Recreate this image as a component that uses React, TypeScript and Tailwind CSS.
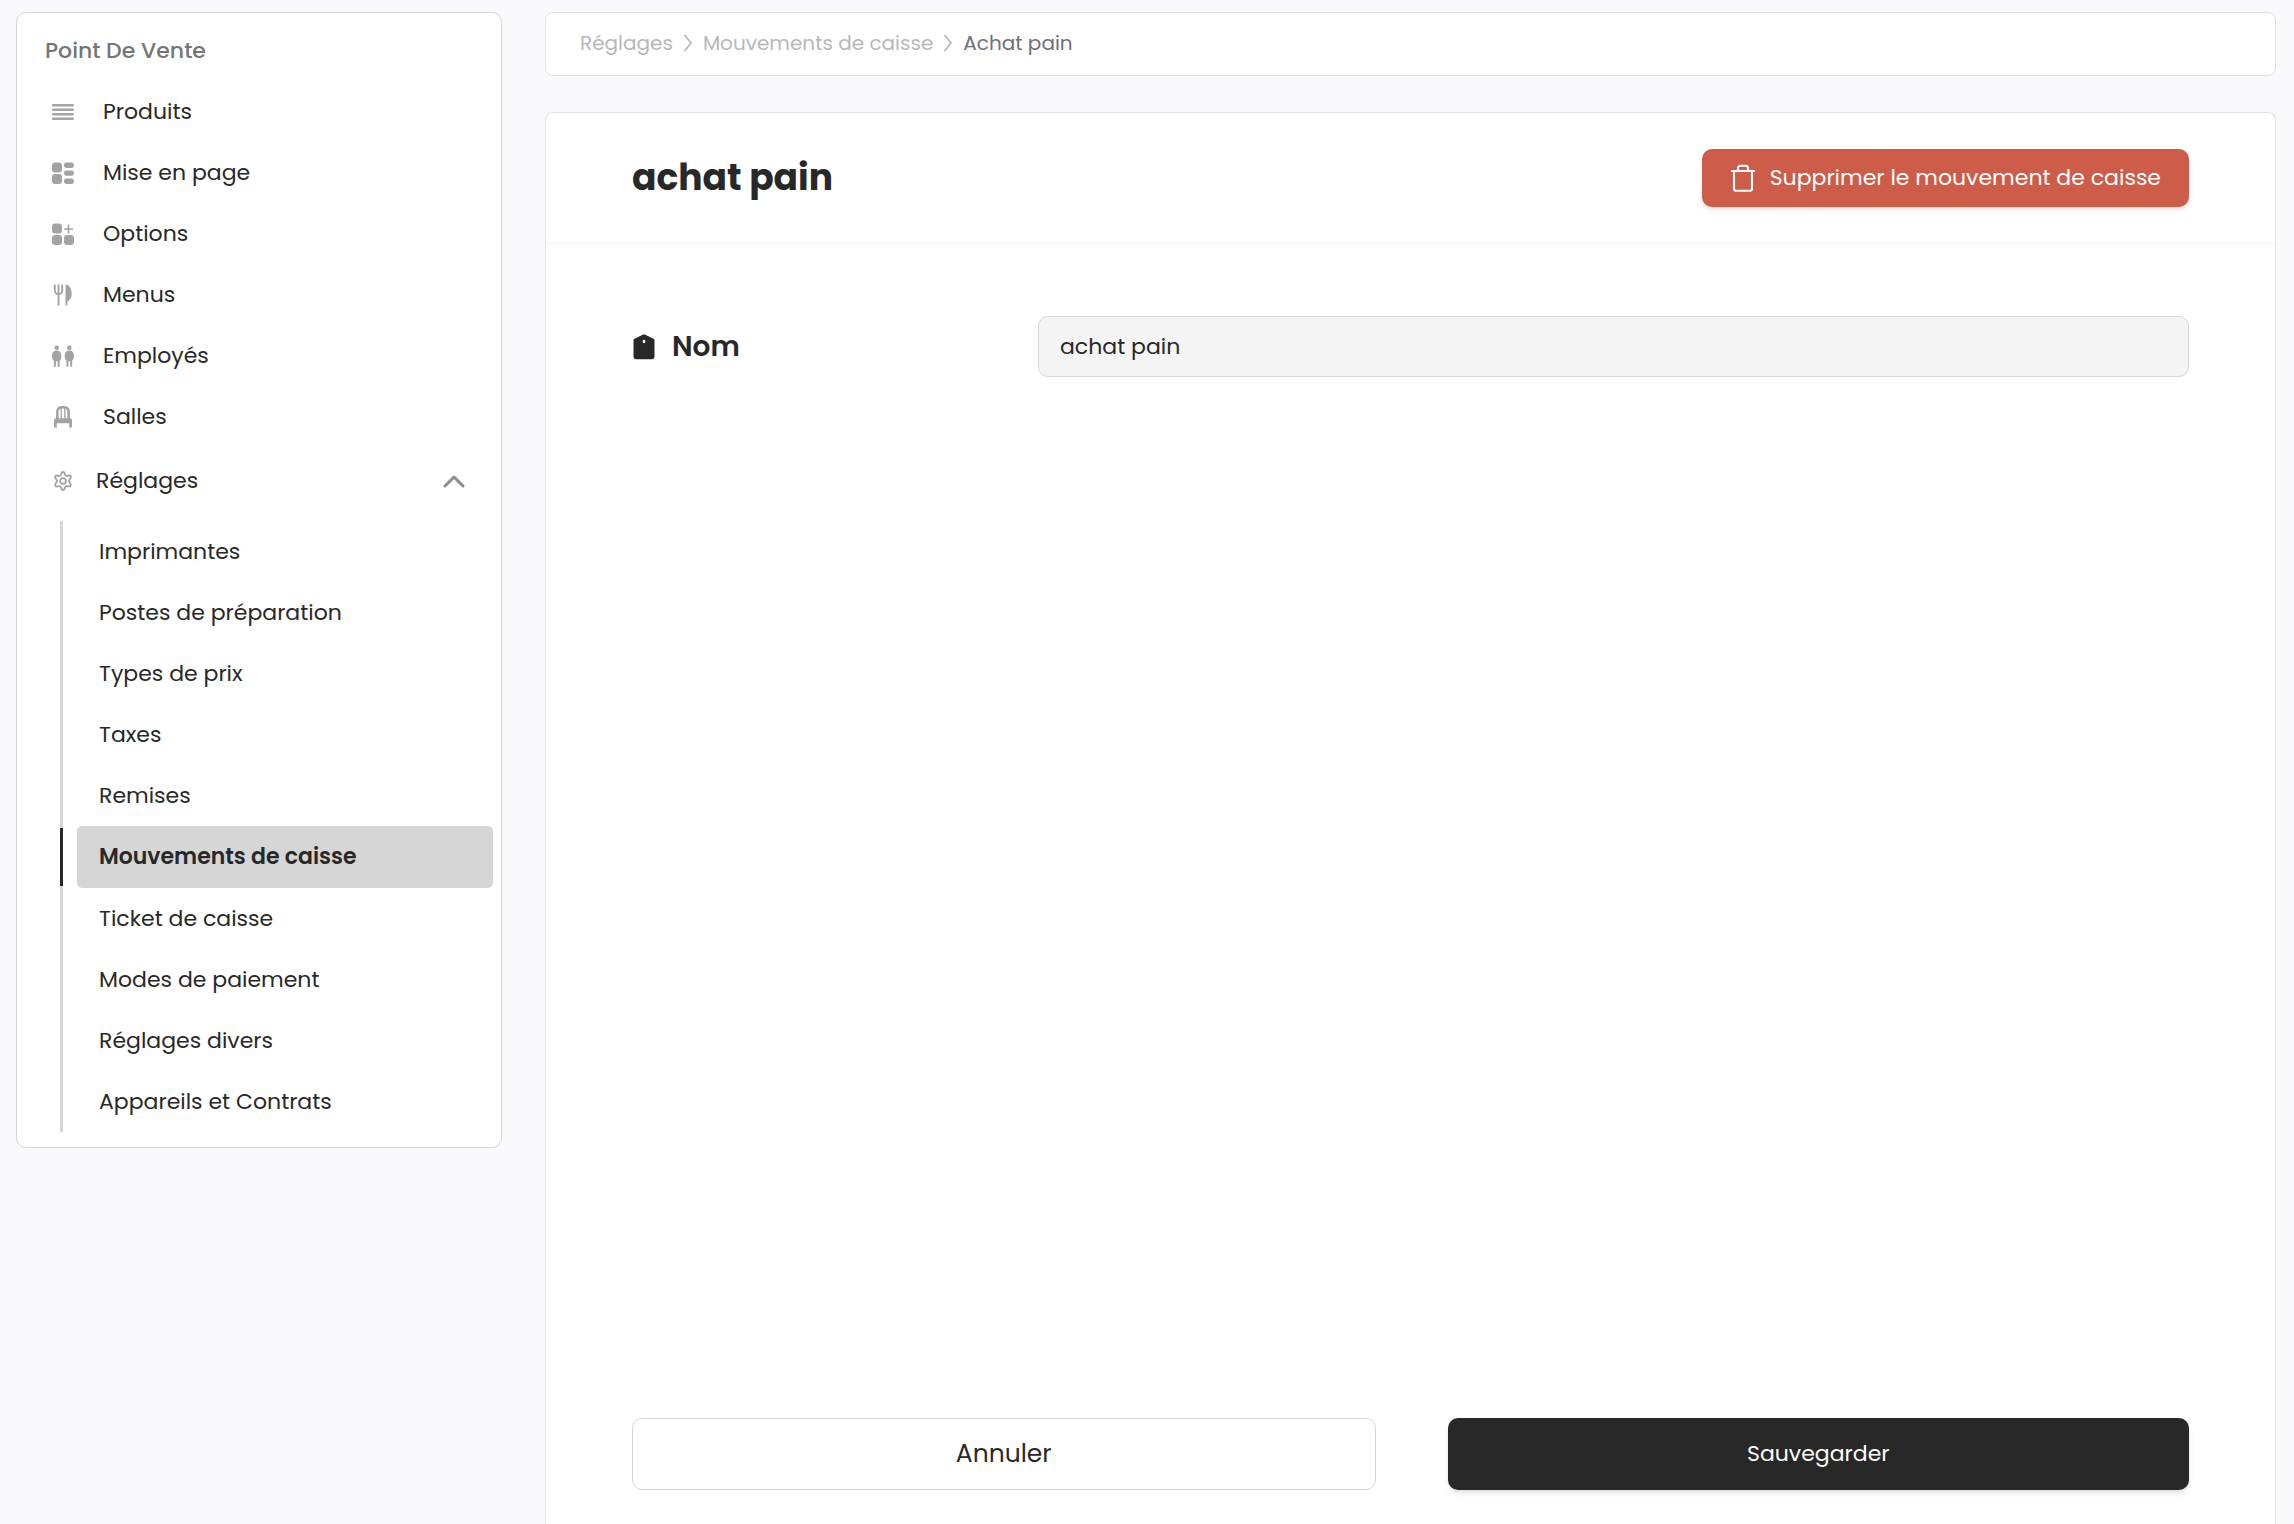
import React, { useState } from 'react'

const menu = [
  { nom: 'Produits', icon: <ProduitsIcon /> },
  { nom: 'Mise en page', icon: <LayoutIcon /> },
  { nom: 'Options', icon: <OptionsIcon /> },
  { nom: 'Menus', icon: <MenusIcon /> },
  { nom: 'Employés', icon: <EmployesIcon /> },
  { nom: 'Salles', icon: <SallesIcon /> },
]

const reglages = [
  'Imprimantes',
  'Postes de préparation',
  'Types de prix',
  'Taxes',
  'Remises',
  'Mouvements de caisse',
  'Ticket de caisse',
  'Modes de paiement',
  'Réglages divers',
  'Appareils et Contrats',
]

function ProduitsIcon() {
  return (
    <svg viewBox="0 0 22 22" className="size-[22px]" stroke="currentColor" strokeWidth="2.6" strokeLinecap="round">
      <path d="M1.3 4.2h19.4M1.3 8.7h19.4M1.3 13.3h19.4M1.3 17.8h19.4" />
    </svg>
  )
}

function LayoutIcon() {
  return (
    <svg viewBox="0 0 22 22" className="size-[22px]" fill="currentColor">
      <rect x="0" y="0.5" width="10" height="10" rx="3.2" />
      <rect x="0" y="12" width="10" height="10" rx="3.2" />
      <rect x="12" y="0.5" width="10" height="5.4" rx="2.7" />
      <rect x="12" y="8.5" width="10" height="5.2" rx="2.6" />
      <rect x="12" y="16.6" width="10" height="5.4" rx="2.7" />
    </svg>
  )
}

function OptionsIcon() {
  return (
    <svg viewBox="0 0 22 22" className="size-[22px]" fill="currentColor">
      <rect x="0" y="0.5" width="10" height="10" rx="3.2" />
      <rect x="0" y="12" width="10" height="10" rx="3.2" />
      <rect x="12" y="12" width="10" height="10" rx="3.2" />
      <path d="M16.5 1.5v9M12.2 6h8.8" stroke="currentColor" strokeWidth="1.7" />
    </svg>
  )
}

function MenusIcon() {
  return (
    <svg viewBox="0 0 22 22" className="size-[22px]" fill="none" stroke="currentColor" strokeWidth="1.9">
      <path d="M2.8 0.5v6a3.7 3.7 0 0 0 7.4 0v-6M6.5 0.5v21" />
      <path d="M13.5 0.5c4 0 6.2 4.5 6.2 9.5c0 4-2.5 6.5-4.4 8v3.5h-1.800z" fill="currentColor" stroke="none" />
    </svg>
  )
}

function EmployesIcon() {
  return (
    <svg viewBox="0 0 22 22" className="size-[22px]" fill="currentColor">
      <circle cx="4.700" cy="2.700" r="2.300" />
      <path d="M4.700 5.600c3 0 4.600 2 4.600 5.400 0 2.500-.5 3.900-1.600 4.500v6.200H5.600v-5.400H3.900v5.400H1.800v-6.200C.6 14.900 0 13.500 0 11c0-3.400 1.700-5.400 4.700-5.400z" />
      <circle cx="17.300" cy="2.700" r="2.300" />
      <path d="M17.300 5.600c3 0 4.700 2 4.700 5.400 0 2.500-.6 3.900-1.800 4.500v6.200h-2v-5.400h-1.800v5.400h-2v-6.200c-1.200-.6-1.700-2-1.700-4.500 0-3.400 1.600-5.400 4.600-5.400z" />
    </svg>
  )
}

function SallesIcon() {
  return (
    <svg viewBox="0 0 22 22" className="size-[22px]" fill="none" stroke="currentColor">
      <path d="M5.300 13V6c0-3 1.500-4.800 5.700-4.800S16.700 3 16.700 6v7" strokeWidth="2.600" />
      <path d="M9.200 1.500V13M12.800 1.500V13" strokeWidth="1.300" />
      <path d="M2 14.200a2 2 0 0 1 2-2h14a2 2 0 0 1 2 2v7.300h-2.800v-4.300H4.800v4.300H2z" fill="currentColor" stroke="none" />
    </svg>
  )
}

function ReglagesIcon() {
  return (
    <svg viewBox="0 0 22 22" className="size-[22px]" fill="none" stroke="currentColor" strokeWidth="1.800" strokeLinejoin="round">
      <path d="M9 4.500C9.400 2.800 9.800 2 11 2s1.600.8 2 2.500c.3 1.100 1.300 1.700 2.500 1.300 1.700-.5 2.700-.5 3.300.5s.1 1.800-1.100 3.100c-.8.900-.8 2.300 0 3.200 1.200 1.300 1.700 2.100 1.100 3.100s-1.600 1-3.300.5c-1.200-.4-2.200.2-2.500 1.300-.4 1.700-.8 2.500-2 2.500s-1.600-.8-2-2.500c-.3-1.100-1.300-1.700-2.500-1.300-1.700.5-2.700.5-3.300-.5s-.1-1.800 1.100-3.100c.8-.9.8-2.300 0-3.200-1.200-1.300-1.700-2.100-1.100-3.100s1.600-1 3.300-.5c1.200.4 2.200-.2 2.500-1.300z" />
      <circle cx="11" cy="11" r="2.900" />
    </svg>
  )
}

function ChevronIcon() {
  return (
    <svg viewBox="0 0 8 18" className="h-[18px] w-2 shrink-0" fill="none" stroke="currentColor" strokeWidth="1.800" strokeLinecap="round" strokeLinejoin="round">
      <path d="M1 1.500l6 7.500-6 7.500" />
    </svg>
  )
}

export default function App() {
  const [nom, setNom] = useState('achat pain')
  const [ouvert, setOuvert] = useState(true)

  return (
    <div className="flex min-h-screen items-stretch bg-[#f9f9fb] pt-3 pr-[18px] pl-4 font-[Poppins,Inter,sans-serif] text-[22px] leading-8 text-[#282828]">
      <nav className="mr-[43px] w-[486px] shrink-0 self-start rounded-[10px] border border-[#d6d6d6] bg-white pb-[15px]">
        <h2 className="flex h-[68px] items-center px-7 pt-2 font-medium text-[#757575]">Point De Vente</h2>
        <ul>
          {menu.map((item) => (
            <li key={item.nom}>
              <a href="#" className="flex h-[61px] items-center gap-[29px] pl-[35px]">
                <span className="text-[#a3a3a3]">{item.icon}</span>
                {item.nom}
              </a>
            </li>
          ))}
        </ul>
        <button type="button" onClick={() => setOuvert(!ouvert)} className="flex h-[68px] w-full items-center gap-[22px] pr-9 pl-[35px]">
          <span className="text-[#a3a3a3]"><ReglagesIcon /></span>
          Réglages
          <svg viewBox="0 0 22 14" className="ml-auto h-[14px] w-[22px] text-[#8c8c8c]" fill="none" stroke="currentColor" strokeWidth="3" strokeLinecap="round" strokeLinejoin="round">
            <path d="M2 12l9-9 9 9" />
          </svg>
        </button>
        {ouvert && (
          <ul className="mt-[6px] mr-2 ml-[43px]">
            {reglages.map((item) =>
              item === 'Mouvements de caisse' ? (
                <li key={item} className="flex h-[62px] items-stretch bg-[linear-gradient(#d6d6d6,#d6d6d6)] bg-[length:3px_100%] bg-no-repeat">
                  <span className="my-[2px] w-[3px] bg-[#282828]" />
                  <a href="#" className="ml-[14px] flex flex-1 items-center rounded-[5px] bg-[#d6d6d6] pl-[22px] font-semibold">{item}</a>
                </li>
              ) : (
                <li key={item} className="border-l-[3px] border-[#d6d6d6]">
                  <a href="#" className="flex h-[61px] items-center pl-9">{item}</a>
                </li>
              )
            )}
          </ul>
        )}
      </nav>

      <div className="flex min-w-0 flex-1 flex-col">
        <div className="mb-9 flex h-16 items-center gap-[11px] rounded-lg border border-[#e1e1e6] bg-white px-[34px] pb-[2px] text-xl text-[#b7b7bb]">
          <a href="#">Réglages</a>
          <ChevronIcon />
          <a href="#">Mouvements de caisse</a>
          <ChevronIcon />
          <span className="text-[#6f6f78]">Achat pain</span>
        </div>

        <main className="flex flex-1 flex-col rounded-t-lg border border-b-0 border-[#e1e1e6] bg-white">
          <div className="flex items-center justify-between border-b border-[#f3f3f3] px-[86px] py-9">
            <h1 className="text-4xl font-bold">achat pain</h1>
            <button type="button" className="flex h-[58px] items-center gap-[14px] rounded-[10px] bg-[#cd5c49] px-7 text-white shadow-md">
              <svg viewBox="0 0 26 28" className="h-7 w-[26px]" fill="none" stroke="currentColor" strokeWidth="2.100" strokeLinecap="round" strokeLinejoin="round">
                <path d="M2 7h22M8 6.500V4a2.200 2.200 0 0 1 2.200-2.200h5.600A2.200 2.200 0 0 1 18 4v2.500M4 7v17.500a2.300 2.300 0 0 0 2.300 2.300h13.400a2.300 2.300 0 0 0 2.300-2.300V7" />
              </svg>
              Supprimer le mouvement de caisse
            </button>
          </div>

          <form className="flex flex-1 flex-col justify-between px-[86px] pt-[72px] pb-[34px]" onSubmit={(e) => e.preventDefault()}>
            <div className="flex items-center">
              <label htmlFor="nom" className="flex w-[406px] shrink-0 items-center gap-4 text-[28px] font-semibold">
                <svg viewBox="0 0 24 26" className="h-[26px] w-6" fill="currentColor">
                  <path fillRule="evenodd" d="M12 .4a2 2 0 0 1 .9.200l9 4.500a1.200 1.200 0 0 1 .6 1V22.800a2.400 2.400 0 0 1-2.400 2.400H3.900a2.400 2.400 0 0 1-2.400-2.400V6.100a1.200 1.200 0 0 1 .6-1l9-4.500A2 2 0 0 1 12 .4zM12 5.700a1.300 1.300 0 0 0-1.300 1.300v1a1.300 1.300 0 0 0 2.600 0V7A1.300 1.300 0 0 0 12 5.700z" />
                </svg>
                Nom
              </label>
              <input
                id="nom"
                type="text"
                value={nom}
                onChange={(e) => setNom(e.target.value)}
                className="h-[61px] min-w-0 flex-1 rounded-[10px] border border-[#d6d6d6] bg-[#f4f4f4] px-[21px] outline-none"
              />
            </div>
            <div className="flex gap-[72px]">
              <button type="button" className="h-[72px] flex-1 rounded-[10px] border border-[#d6d6d6] bg-white text-[25px]">Annuler</button>
              <button type="submit" className="h-[72px] flex-1 rounded-[10px] bg-[#282828] text-white shadow-md">Sauvegarder</button>
            </div>
          </form>
        </main>
      </div>
    </div>
  )
}
